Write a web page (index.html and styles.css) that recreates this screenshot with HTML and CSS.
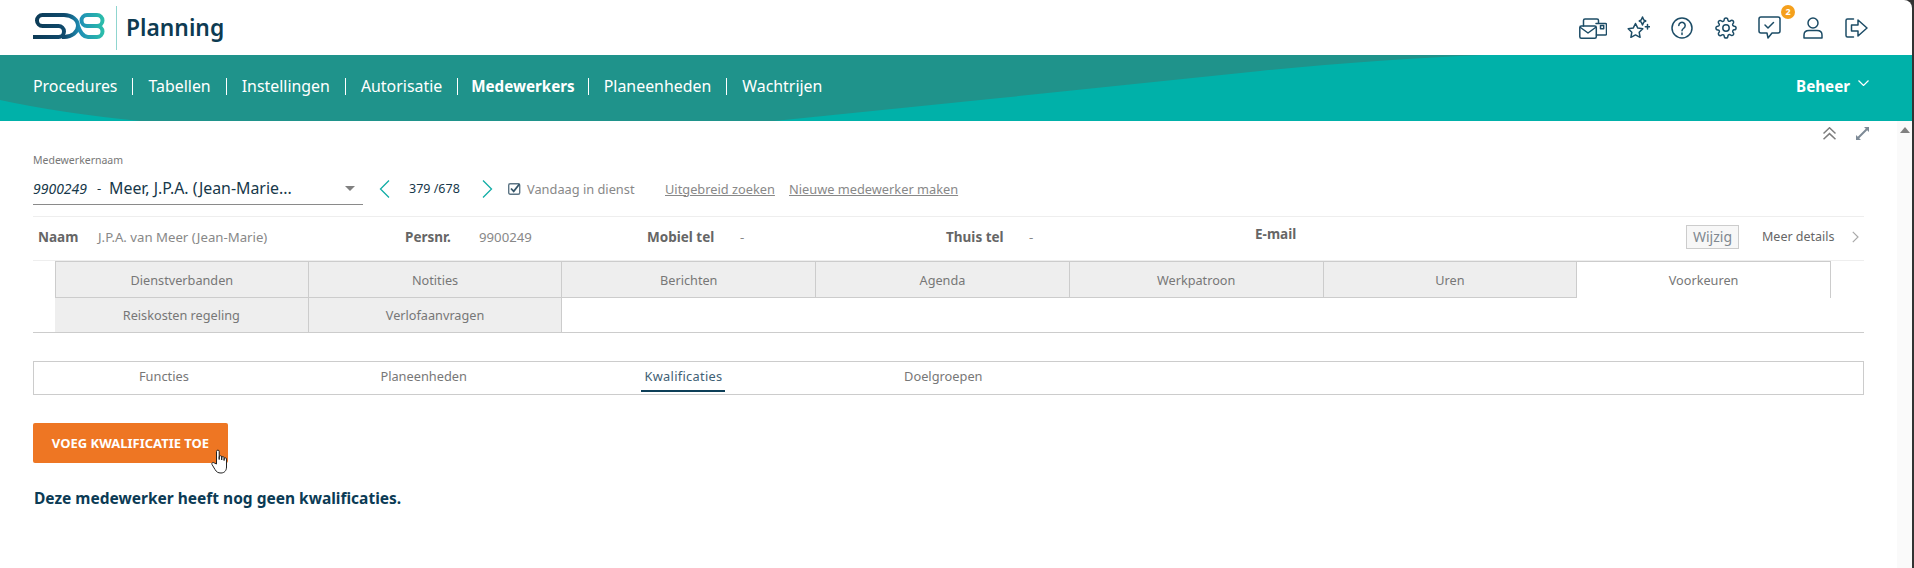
FILE: index.html
```html
<!DOCTYPE html>
<html lang="nl">
<head>
<meta charset="utf-8">
<title>SDB Planning</title>
<link rel="stylesheet" href="styles.css">
</head>
<body>
<div class="app">
  <header class="top">
    <div class="brand">
      <svg class="logo" viewBox="0 0 72 28" fill="none" stroke-width="4">
        <defs>
          <linearGradient id="lg" x1="0" x2="72" y1="0" y2="0" gradientUnits="userSpaceOnUse">
            <stop offset="0" stop-color="#0c3a55"/><stop offset=".45" stop-color="#0f4a6d"/>
            <stop offset=".65" stop-color="#1f8fb5"/><stop offset="1" stop-color="#2cc0aa"/>
          </linearGradient>
        </defs>
        <path stroke="url(#lg)" d="M31 3H9.500A5.500 5.500 0 0 0 9.500 14H25.500A5.500 5.500 0 0 1 25.500 25H0"/>
        <path stroke="url(#lg)" d="M24 3H31C39 3 45 8 45 14S39 25 31 25H29"/>
        <path stroke="url(#lg)" d="M45 14C47 20 50 25 55 25H64A5.500 5.500 0 0 0 64 14H54A5.500 5.500 0 0 1 54 3H64A5.500 5.500 0 0 1 64 14"/>
      </svg>
      <span class="brand-sep"></span>
      <span class="brand-name">Planning</span>
    </div>
    <div class="top-icons">
      <span class="ti ti-wide"><svg width="28" height="22" viewBox="0 0 28 22" class="ic"><rect x=".8" y="9" width="16.500" height="12.200" rx="1.500"/><path d="M1.500 10.500L9 16l7.500-5.500M4.500 9V3.500Q4.500 2 6 2h12q1.500 0 1.500 1.500V6"/><path d="M17 6.500h9.500q1 0 1 1V17q0 1-1 1H17.500"/><rect x="21.500" y="8.500" width="3.200" height="3.200"/></svg></span>
      <span class="ti"><svg width="23" height="23" viewBox="0 0 23 23" class="ic"><path d="M8.500 7.500l2.300 4.600 5 .7-3.600 3.500.9 5-4.600-2.400-4.600 2.400.9-5L1.200 12.800l5-.7z"/><path d="M15.500 1l1.200 2.800 2 1.200-2 1.200L15.500 9l-1.200-2.800-2-1.200 2-1.200zM20.500 8.500v4.500M18.300 10.700h4.500"/></svg></span>
      <span class="ti"><svg width="22" height="22" viewBox="0 0 22 22" class="ic"><circle cx="11" cy="11" r="10"/><path d="M7.800 8.500a3.200 3.200 0 1 1 4.800 2.800c-1 .6-1.600 1.200-1.600 2.500M11 16v1.400"/></svg></span>
      <span class="ti"><svg width="22" height="22" viewBox="0 0 24 24" class="ic ic-gear"><circle cx="12" cy="12" r="3.500"/><path d="M19.400 15a1.650 1.650 0 0 0 .33 1.820l.06.06a2 2 0 0 1 0 2.830 2 2 0 0 1-2.830 0l-.06-.06a1.650 1.650 0 0 0-1.820-.33 1.650 1.650 0 0 0-1 1.510V21a2 2 0 0 1-2 2 2 2 0 0 1-2-2v-.09A1.650 1.650 0 0 0 9 19.400a1.650 1.650 0 0 0-1.820.33l-.06.06a2 2 0 0 1-2.830 0 2 2 0 0 1 0-2.830l.06-.06a1.650 1.650 0 0 0 .33-1.820 1.650 1.650 0 0 0-1.510-1H3a2 2 0 0 1-2-2 2 2 0 0 1 2-2h.09A1.650 1.650 0 0 0 4.600 9a1.650 1.650 0 0 0-.33-1.820l-.06-.06a2 2 0 0 1 0-2.830 2 2 0 0 1 2.830 0l.06.06a1.650 1.650 0 0 0 1.820.33H9a1.650 1.650 0 0 0 1-1.510V3a2 2 0 0 1 2-2 2 2 0 0 1 2 2v.09a1.650 1.650 0 0 0 1 1.510 1.650 1.650 0 0 0 1.820-.33l.06-.06a2 2 0 0 1 2.830 0 2 2 0 0 1 0 2.830l-.06.06a1.650 1.650 0 0 0-.33 1.820V9a1.650 1.650 0 0 0 1.510 1H21a2 2 0 0 1 2 2 2 2 0 0 1-2 2h-.09a1.650 1.650 0 0 0-1.510 1z"/></svg></span>
      <span class="ti ti-narrow"><svg width="23" height="23" viewBox="0 0 23 23" class="ic"><path d="M3 1h17q2 0 2 2v12q0 2-2 2h-6l-4 5-1-5H3q-2 0-2-2V3q0-2 2-2z"/><path d="M7 9l3 3 5.500-5.500"/></svg><span class="badge">2</span></span>
      <span class="ti ti-narrow"><svg width="20" height="22" viewBox="0 0 20 22" class="ic"><circle cx="10" cy="6" r="5"/><path d="M1 21v-3q0-4.500 5-4.500h8q5 0 5 4.500v3z"/></svg></span>
      <span class="ti"><svg width="23" height="20" viewBox="0 0 23 20" class="ic"><path d="M8.500 1H2.500Q1 1 1 2.500v15Q1 19 2.500 19h6"/><path d="M6.500 7H13V2l9 8-9 8v-5H6.500z"/></svg></span>
    </div>
  </header>

  <nav class="banner">
    <svg class="banner-bg" viewBox="0 0 1912 66" preserveAspectRatio="none"><path d="M0 45Q60 58 140 66H774L1000 43L1260 16Q1380 4 1484 0H0Z"/></svg>
    <ul class="menu">
      <li>Procedures</li><li>Tabellen</li><li>Instellingen</li><li>Autorisatie</li>
      <li class="on">Medewerkers</li><li>Planeenheden</li><li>Wachtrijen</li>
    </ul>
    <div class="beheer">Beheer
      <svg width="11" height="6" viewBox="0 0 11 6" class="beheer-c"><path d="M.5.500l5 5 5-5"/></svg>
    </div>
  </nav>

  <div class="below">
    <main class="main">
      <div class="tools">
        <svg width="13" height="13" viewBox="0 0 13 13" class="tool tool-up"><path d="M.5 6.500L6.500.8l6 5.700M.5 12.300L6.500 6.600l6 5.700"/></svg>
        <svg width="13" height="13" viewBox="0 0 13 13" class="tool-exp"><path class="fill" d="M8 0h5v5l-1.800-1.800L3.200 11.200 5 13H0V8l1.800 1.800L9.800 1.800z"/></svg>
      </div>
      <div class="field-label">Medewerkernaam</div>
      <div class="picker">
        <div class="select">
          <i class="num">9900249</i><span class="dash">-</span><span class="sel-name">Meer, J.P.A. (Jean-Marie...</span>
          <span class="caret"></span>
        </div>
        <svg width="11" height="18" viewBox="0 0 11 18" class="chev chev-l"><path d="M10 .5L1.500 9l8.500 8.500"/></svg>
        <span class="count">379 /678</span>
        <svg width="11" height="18" viewBox="0 0 11 18" class="chev chev-r"><path d="M1 .5L9.500 9 1 17.500"/></svg>
        <svg width="13" height="13" viewBox="0 0 13 13" class="check"><rect x=".7" y="1.700" width="11" height="10.600" rx="1.500"/><path class="tick" d="M3 6.500l2.700 2.800L11.500 2"/></svg>
        <span class="today">Vandaag in dienst</span>
        <a class="lnk lnk-a">Uitgebreid zoeken</a>
        <a class="lnk lnk-b">Nieuwe medewerker maken</a>
      </div>
      <div class="info">
        <div class="pair p1"><b>Naam</b><span>J.P.A. van Meer (Jean-Marie)</span></div>
        <div class="pair p2"><b>Persnr.</b><span>9900249</span></div>
        <div class="pair p3"><b>Mobiel tel</b><span>-</span></div>
        <div class="pair p4"><b>Thuis tel</b><span>-</span></div>
        <div class="pair p5"><b>E-mail</b></div>
        <span class="edit">Wijzig</span>
        <span class="more">Meer details</span>
        <svg width="7" height="12" viewBox="0 0 7 12" class="more-c"><path d="M.8.800L6 6 .8 11.200"/></svg>
      </div>
      <div class="tabs">
        <div class="tab">Dienstverbanden</div><div class="tab">Notities</div><div class="tab">Berichten</div><div class="tab">Agenda</div><div class="tab">Werkpatroon</div><div class="tab">Uren</div><div class="tab active">Voorkeuren</div>
        <div class="tab r2">Reiskosten regeling</div><div class="tab r2">Verlofaanvragen</div>
      </div>
      <div class="subtabs">
        <div class="sub"><span>Functies</span></div>
        <div class="sub"><span>Planeenheden</span></div>
        <div class="sub current"><span>Kwalificaties</span></div>
        <div class="sub"><span>Doelgroepen</span></div>
      </div>
      <div class="btn-wrap">
        <button class="btn">VOEG KWALIFICATIE TOE</button>
        <svg class="hand" width="19" height="25" viewBox="0 0 19 25"><path d="M5.500 15V2.500a1.300 1.300 0 0 1 2.700 0V10.500V8a1.200 1.200 0 0 1 2.500 0v3V8.800a1.200 1.200 0 0 1 2.400 0v2.700V10a1.200 1.200 0 0 1 2.400 0v8c0 3.500-2 6-5.500 6-3 0-4.500-1-6-3.500L1 15.500c-.8-1.500 1-2.800 2.300-1.500z"/></svg>
      </div>
      <p class="empty">Deze medewerker heeft nog geen kwalificaties.</p>
    </main>
    <aside class="scroll"><span class="scroll-up"></span></aside>
  </div>
</div>
</body>
</html>
```
FILE: styles.css
```css
* { box-sizing: border-box; }
html, body { margin: 0; padding: 0; height: 100%; overflow: hidden; }
body { background: #333; font-family: "Noto Sans", "Open Sans", sans-serif; color: #666; }
.app { width: 1912px; height: 568px; background: #fff; border-top-right-radius: 8px; overflow: hidden; display: flex; flex-direction: column; }

.top { height: 55px; flex: none; display: flex; justify-content: space-between; align-items: center; padding: 0 34px 0 33px; }
.brand { display: flex; align-items: center; }
.logo { width: 72px; height: 28px; margin-top: -3px; }
.brand-sep { width: 1px; height: 44px; background: #8fd5cf; margin: 1px 9px 0 11px; }
.brand-name { font-size: 22.800px; font-weight: 600; color: #0d3b52; }
.top-icons { display: flex; }
.ti { width: 44px; height: 30px; display: flex; align-items: center; justify-content: center; position: relative; }
.ti-wide { width: 46px; }
.ti-narrow { width: 43px; }
.ic { fill: none; stroke: #1c4c66; stroke-width: 1.500; stroke-linejoin: round; stroke-linecap: round; }
.ic-gear { stroke-width: 1.600; }
.badge { position: absolute; left: 33px; top: -8px; width: 14px; height: 14px; border-radius: 50%; background: #f5a01c; color: #fff; font-size: 9px; font-weight: 700; line-height: 14px; text-align: center; }

.banner { height: 66px; flex: none; background: #00b1a9; position: relative; display: flex; align-items: center; justify-content: space-between; padding: 0 43px 4px 33px; color: #fff; }
.banner-bg { position: absolute; inset: 0; width: 100%; height: 100%; }
.banner-bg path { fill: #1f938b; }
.menu { position: relative; display: flex; list-style: none; margin: 0; padding: 0; }
.menu li { font-size: 15.900px; line-height: 17px; padding: 0 15px; border-left: 1px solid #fff; white-space: nowrap; }
.menu li:first-child { padding-left: 0; border-left: 0; }
.menu .on { font-size: 15.200px; font-weight: 700; padding: 0 13px 0 13px; }
.beheer { position: relative; font-size: 15.200px; font-weight: 700; display: flex; align-items: center; gap: 8px; }
.beheer-c { fill: none; stroke: #fff; stroke-width: 1.200; margin-top: -6px; }

.below { flex: 1; display: flex; min-height: 0; }
.main { width: 1897px; flex: none; padding: 0 33px; }
.scroll { width: 15px; flex: none; background: #fafafa; padding-top: 6px; display: flex; justify-content: center; align-items: flex-start; }
.scroll-up { width: 0; height: 0; border-left: 5px solid transparent; border-right: 5px solid transparent; border-bottom: 6px solid #808080; }

.tools { height: 32px; display: flex; justify-content: flex-end; align-items: flex-start; gap: 20px; padding-top: 6px; margin-right: -5px; }
.tool { fill: none; stroke: #7d7d7d; stroke-width: 1.500; }
.tool-exp .fill { fill: #7d8a96; }

.field-label { font-size: 10.500px; line-height: 14px; color: #777; }
.picker { height: 37px; margin-top: 3px; display: flex; align-items: center; }
.select { width: 330px; height: 35px; flex: none; align-self: flex-start; display: flex; align-items: center; border-bottom: 1px solid #8a8a8a; color: #17384a; padding-top: 2px; }
.num { font-size: 14px; width: 55px; }
.dash { margin: 0 9px; width: 3px; font-size: 13px; }
.sel-name { font-size: 15.900px; flex: 1; white-space: nowrap; }
.caret { width: 0; height: 0; margin-right: 8px; border-left: 5px solid transparent; border-right: 5px solid transparent; border-top: 5px solid #808080; }
.chev { fill: none; stroke: #12ada6; stroke-width: 1.300; flex: none; }
.chev-l { margin-left: 16px; }
.count { font-size: 12.500px; color: #17384a; margin-left: 19px; width: 55px; white-space: nowrap; }
.chev-r { margin-left: 18px; }
.check { fill: none; stroke: #5d7585; stroke-width: 1.400; margin-left: 15px; flex: none; }
.check .tick { stroke: #35566a; stroke-width: 1.800; }
.today { font-size: 12.800px; color: #888; margin-left: 6px; width: 108px; white-space: nowrap; }
.lnk { font-size: 12.800px; color: #888; text-decoration: underline; white-space: nowrap; }
.lnk-a { margin-left: 30px; width: 113px; }
.lnk-b { margin-left: 11px; }

.info { height: 45px; margin-top: 9px; border-top: 1px solid #eee; border-bottom: 1px solid #eee; display: flex; align-items: center; padding: 0 0 4px 5px; font-size: 13.200px; color: #888; }
.pair { display: flex; align-items: center; flex: none; white-space: nowrap; }
.pair b { font-size: 13.500px; color: #666; font-weight: 700; flex: none; }
.p1 { width: 367px; } .p1 b { width: 60px; }
.p2 { width: 242px; } .p2 b { width: 74px; }
.p3 { width: 299px; } .p3 b { width: 93px; }
.p4 { width: 309px; } .p4 b { width: 83px; }
.p5 { width: 431px; margin-top: -5px; }
.edit { width: 53px; height: 24px; flex: none; border: 1px solid #ccc; background: #f7f7f7; font-size: 14px; line-height: 22px; text-align: center; color: #808890; }
.more { margin-left: 23px; color: #666; font-size: 12.500px; width: 73px; white-space: nowrap; }
.more-c { fill: none; stroke: #aaa; stroke-width: 1.200; margin-left: 17px; }

.tabs { height: 72px; display: grid; grid-template-columns: repeat(7, 253.710px); grid-template-rows: 37px 34px; padding-left: 22px; border-bottom: 1px solid #ccc; }
.tab { background: #eee; border-top: 1px solid #ccc; border-right: 1px solid #ccc; border-bottom: 1px solid #ccc; display: flex; align-items: center; justify-content: center; font-size: 12.700px; color: #777; }
.tab:first-child { border-left: 1px solid #ccc; }
.tab.active { background: #fff; border-bottom: 0; }
.tab.r2 { border-top: 0; border-bottom: 0; }

.subtabs { height: 34px; margin-top: 28px; border: 1px solid #ccc; display: grid; grid-template-columns: repeat(4, 259.800px); }
.sub { display: flex; justify-content: center; font-size: 12.800px; color: #777; }
.sub span { height: 30px; line-height: 29px; }
.current span { width: 84px; text-align: center; color: #3f6175; letter-spacing: .3px; border-bottom: 2px solid #0d3f58; }

.btn-wrap { position: relative; margin-top: 28px; height: 40px; }
.btn { width: 195px; height: 40px; border: 0; border-radius: 2px; background: #ee7623; color: #fff; font-family: inherit; font-size: 13px; font-weight: 700; padding: 0; display: block; }
.hand { position: absolute; left: 178px; top: 26px; fill: #fff; stroke: #222; stroke-width: 1; stroke-linejoin: round; }
.empty { margin: 23px 0 0 1px; font-size: 15.500px; line-height: 24px; font-weight: 700; color: #0b3b55; }
```
